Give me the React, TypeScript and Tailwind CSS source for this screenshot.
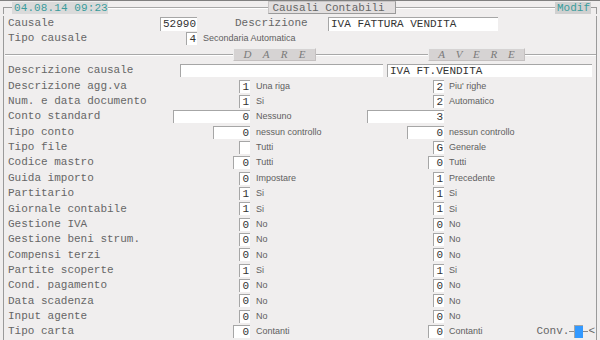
import React from "react";

const MONO = "font-['Liberation_Mono','Courier_New',monospace]";
const SANS = "font-['Liberation_Sans',Arial,sans-serif]";

function Box({ v = "", w, left = false, h = 13 }: { v?: string; w: number; left?: boolean; h?: number }) {
  return (
    <div
      className={`bg-white border-t border-l border-[#a6a6a6] text-[11px] text-[#333] ${MONO} ${
        left ? "text-left pl-[2px]" : "text-right pr-px"
      }`}
      style={{ width: w, height: h, lineHeight: `${h - 1}px` }}
    >
      {v}
    </div>
  );
}

function Desc({ t }: { t: string }) {
  return <span className={`text-[9px] leading-none text-[#606060] whitespace-nowrap ${SANS}`}>{t}</span>;
}

type Row = { label: string; lv: string; lw: number; ld: string; rv: string; rw: number; rd: string };

const rows: Row[] = [
  { label: "Descrizione agg.va", lv: "1", lw: 11, ld: "Una riga", rv: "2", rw: 11, rd: "Piu' righe" },
  { label: "Num. e data documento", lv: "1", lw: 11, ld: "Si", rv: "2", rw: 11, rd: "Automatico" },
  { label: "Conto standard", lv: "0", lw: 77, ld: "Nessuno", rv: "3", rw: 77, rd: "" },
  { label: "Tipo conto", lv: "0", lw: 37, ld: "nessun controllo", rv: "0", rw: 37, rd: "nessun controllo" },
  { label: "Tipo file", lv: "", lw: 11, ld: "Tutti", rv: "G", rw: 11, rd: "Generale" },
  { label: "Codice mastro", lv: "0", lw: 17, ld: "Tutti", rv: "0", rw: 16, rd: "Tutti" },
  { label: "Guida importo", lv: "0", lw: 11, ld: "Impostare", rv: "1", rw: 11, rd: "Precedente" },
  { label: "Partitario", lv: "1", lw: 11, ld: "Si", rv: "1", rw: 11, rd: "Si" },
  { label: "Giornale contabile", lv: "1", lw: 11, ld: "Si", rv: "1", rw: 11, rd: "Si" },
  { label: "Gestione IVA", lv: "0", lw: 11, ld: "No", rv: "0", rw: 11, rd: "No" },
  { label: "Gestione beni strum.", lv: "0", lw: 11, ld: "No", rv: "0", rw: 11, rd: "No" },
  { label: "Compensi terzi", lv: "0", lw: 11, ld: "No", rv: "0", rw: 11, rd: "No" },
  { label: "Partite scoperte", lv: "1", lw: 11, ld: "Si", rv: "1", rw: 11, rd: "Si" },
  { label: "Cond. pagamento", lv: "0", lw: 11, ld: "No", rv: "0", rw: 11, rd: "No" },
  { label: "Data scadenza", lv: "0", lw: 11, ld: "No", rv: "0", rw: 11, rd: "No" },
  { label: "Input agente", lv: "0", lw: 11, ld: "No", rv: "0", rw: 11, rd: "No" },
  { label: "Tipo carta", lv: "0", lw: 17, ld: "Contanti", rv: "0", rw: 16, rd: "Contanti" },
];

function Line({ cls = "" }: { cls?: string }) {
  return <div className={`h-[2px] border-t border-[#a8a8a8] border-b border-b-white ${cls}`} />;
}

function Header({ letters, w }: { letters: string[]; w: number }) {
  return (
    <div
      className="h-[13px] bg-[#d6d3d3] border border-[#c4c0c0] border-t-[#eeeeee] border-l-[#eeeeee] flex items-center justify-around px-[4px]"
      style={{ width: w }}
    >
      {letters.map((l, i) => (
        <span key={i} className="font-['Liberation_Serif',serif] italic text-[11px] leading-none text-[#7a7a7a]">
          {l}
        </span>
      ))}
    </div>
  );
}

export default function App() {
  return (
    <div className={`w-[600px] h-[340px] overflow-hidden bg-[#f0eeee] border-t border-[#808080] ${MONO} text-[11px] text-[#666]`}>
      {/* title bar */}
      <div className="flex h-[13px] items-center pl-[3px] pr-[3px]">
        <div className="self-end h-[7px] w-[9px] border-t border-l border-[#9a9a9a]" />
        <div className="h-[12px] w-[96px] bg-[#dadada] text-[#3a9c9c] text-[11px] leading-[12px] pl-[2px] tracking-[0.1px]">
          04.08.14 09:23
        </div>
        <Line cls="flex-1" />
        <div className="h-[13px] w-[128px] bg-[#e2dfdf] border border-[#c8c5c5] border-r-[#9a9a9a] border-b-[#9a9a9a] text-[#666] text-[11px] leading-[12px] pl-[4px]">
          Causali Contabili
        </div>
        <Line cls="flex-1" />
        <div className="h-[12px] w-[36px] bg-[#d0d0d0] text-[#3a9c9c] text-[11px] leading-[12px] pl-[2px]">Modif</div>
        <div className="self-end h-[7px] w-[6px] border-t border-r border-[#9a9a9a]" />
      </div>

      {/* body */}
      <div className="ml-[3px] w-[594px] h-[326px] border-l border-r border-[#9a9a9a]">
        <div className="flex items-center h-[15px] mt-[2px]">
          <div className="w-[156px] pl-[4px]">Causale</div>
          <Box v="52990" w={37} h={14} />
          <div className="w-[93px] ml-[38px]">Descrizione</div>
          <Box v="IVA FATTURA VENDITA" w={170} left h={14} />
        </div>
        <div className="flex items-center h-[15px]">
          <div className="w-[182px] pl-[4px]">Tipo causale</div>
          <Box v="4" w={11} />
          <div className="pl-[6px]">
            <Desc t="Secondaria Automatica" />
          </div>
        </div>
        <div className="flex items-center h-[17px] pl-px">
          <Line cls="w-[228px]" />
          <Header letters={["D", "A", "R", "E"]} w={83} />
          <Line cls="w-[112px]" />
          <Header letters={["A", "V", "E", "R", "E"]} w={97} />
          <Line cls="flex-1" />
        </div>

        <div className="flex items-center h-[15.35px]">
          <div className="w-[176px] pl-[4px]">Descrizione causale</div>
          <Box v="" w={203} />
          <div className="w-[4px]" />
          <Box v="IVA FT.VENDITA" w={205} left />
        </div>

        {rows.map((r, i) => (
          <div key={i} className="flex items-center h-[15.35px]">
            <div className="w-[246px] flex items-center">
              <div className="flex-1 pl-[4px] whitespace-nowrap">{r.label}</div>
              <Box v={r.lv} w={r.lw} />
            </div>
            <div className="w-[194px] flex items-center">
              <div className="flex-1 pl-[6px]">
                <Desc t={r.ld} />
              </div>
              <Box v={r.rv} w={r.rw} />
            </div>
            <div className="flex-1 flex items-center pl-[5px]">
              <div className="flex-1">
                <Desc t={r.rd} />
              </div>
              {i === rows.length - 1 && (
                <div className="flex items-center pr-px">
                  <span className="text-[#666]">Conv.</span>
                  <div className="w-[5px] h-px bg-[#8a8a8a]" />
                  <div className="w-[9px] h-[13px] bg-[#3399ff] border-l border-t border-[#a6a6a6]" />
                  <div className="w-[5px] h-px bg-[#8a8a8a]" />
                  <span className="text-[#666] leading-none">&lt;</span>
                </div>
              )}
            </div>
          </div>
        ))}
      </div>
    </div>
  );
}
